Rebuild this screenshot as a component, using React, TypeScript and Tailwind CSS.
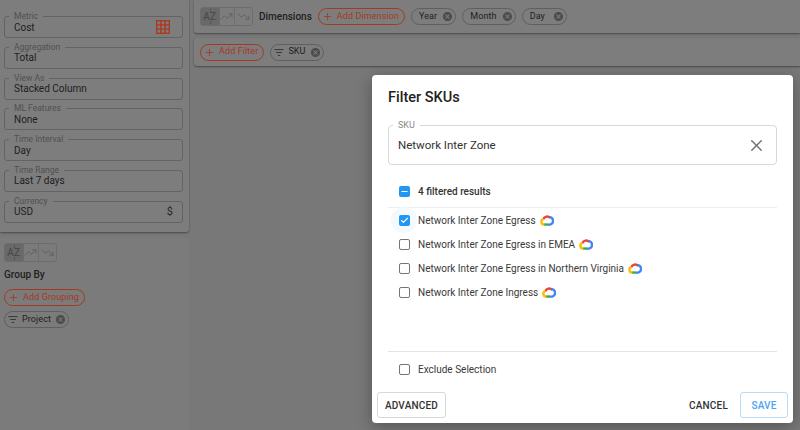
import { Check, Minus, Plus, TrendingDown, TrendingUp, X } from "lucide-react";
import type { ReactNode } from "react";

function CancelIcon({ className }: { className: string }) {
  return (
    <svg viewBox="0 0 24 24" className={className} fill="currentColor">
      <path d="M12 2C6.47 2 2 6.47 2 12s4.47 10 10 10 10-4.47 10-10S17.53 2 12 2zm5 13.59L15.59 17 12 13.41 8.41 17 7 15.59 10.59 12 7 8.41 8.41 7 12 10.59 15.59 7 17 8.41 13.41 12 17 15.59z" />
    </svg>
  );
}

function FilterIcon() {
  return (
    <svg viewBox="0 0 12 10" className="mr-[4px] h-[9px] w-[10px] shrink-0" fill="none" stroke="#333333" strokeWidth="1.1">
      <path d="M0.5 1.5h11M2.5 5h7M4.5 8.5h3" />
    </svg>
  );
}

function GoogleCloud() {
  return (
    <svg viewBox="0 0 24 20" className="h-[12px] w-[14px] shrink-0" fill="none" strokeWidth="4">
      <path stroke="#ea4335" d="M5.5 9A7 7 0 0 1 17.5 6.5" />
      <path stroke="#4285f4" d="M16.5 5.2A6.4 6.4 0 0 1 17.5 17.8H13.5" />
      <path stroke="#34a853" d="M14 17.8H6.5" />
      <path stroke="#fbbc05" d="M7.5 17.8A4.7 4.7 0 0 1 5.8 8.6" />
    </svg>
  );
}

function Field({ label, value, icon }: { label: string; value: string; icon?: ReactNode }) {
  return (
    <div className="relative flex h-[22px] items-center justify-between rounded-[3px] border border-[#636363] pl-[9px] pr-[4px]">
      <span className="absolute -top-[6px] left-[4px] bg-[#7d7d7d] px-[5px] text-[8.5px] leading-[11px] text-[#505050]">{label}</span>
      <span className="text-[10px] text-[#1e1e1e]">{value}</span>
      {icon}
    </div>
  );
}

function SortToggle() {
  return (
    <div className="flex h-[19px] w-[53px] rounded-[3px] border border-[#6d6d6d] text-[#5a5a5a]">
      <div className="relative flex w-[18px] items-center justify-center bg-[#696969] text-[10px] tracking-[0.2px] text-[#464646]">
        <span className="absolute left-1/2 top-[1px] h-[3px] border-l border-dotted border-[#464646]" />
        <span className="absolute bottom-[1px] left-1/2 h-[3px] border-l border-dotted border-[#464646]" />
        <span>AZ</span>
      </div>
      <div className="flex w-[17px] items-center justify-center border-x border-[#6d6d6d]">
        <TrendingUp className="h-[13px] w-[13px]" strokeWidth={1.4} />
      </div>
      <div className="flex w-[17px] items-center justify-center">
        <TrendingDown className="h-[13px] w-[13px]" strokeWidth={1.4} />
      </div>
    </div>
  );
}

function AddChip({ label }: { label: string }) {
  return (
    <div className="flex h-[17px] items-center gap-[4px] rounded-full border border-[#a5391f] pl-[3px] pr-[5px] text-[9px] tracking-[0.1px] text-[#a5391f]">
      <Plus className="h-[11px] w-[11px]" strokeWidth={1.8} />
      <span>{label}</span>
    </div>
  );
}

function Chip({ label, filter }: { label: string; filter?: boolean }) {
  return (
    <div className="flex h-[17px] min-w-[45px] items-center justify-between rounded-full border border-[#5f5f5f] pl-[3px] pr-[2px] text-[9px] tracking-[0.1px] text-[#1e1e1e]">
      <span className="flex items-center">
        {filter && <FilterIcon />}
        <span className={filter ? "mr-[4px]" : "mr-[5px] ml-[4px]"}>{label}</span>
      </span>
      <CancelIcon className="h-[11px] w-[11px] text-[#4d4d4d]" />
    </div>
  );
}

function Checkbox({ state }: { state?: "checked" | "partial" }) {
  if (state) {
    return (
      <span className="flex h-[11px] w-[11px] shrink-0 items-center justify-center rounded-[2px] bg-[#2196f3] text-white">
        {state === "checked" ? <Check className="h-[9px] w-[9px]" strokeWidth={3} /> : <Minus className="h-[9px] w-[9px]" strokeWidth={3} />}
      </span>
    );
  }
  return <span className="h-[11px] w-[11px] shrink-0 rounded-[2px] border-[1.5px] border-[#757575]" />;
}

function SkuRow({ label, checked }: { label: string; checked?: boolean }) {
  return (
    <div className="relative flex h-[24px] items-center pl-[11px]">
      {checked && <span className="absolute left-[3px] top-[-1px] h-[26px] w-[26px] rounded-full bg-[#f4f9fe]" />}
      <span className="relative flex items-center">
        <Checkbox state={checked ? "checked" : undefined} />
        <span className="ml-[8px] mr-[4px] text-[10px] text-[#3a3a3a]">{label}</span>
        <GoogleCloud />
      </span>
    </div>
  );
}

export default function App() {
  return (
    <div className="relative flex h-[430px] w-[800px] gap-[5px] overflow-hidden bg-[#787878] font-['Roboto',sans-serif]">
      <aside className="flex w-[189px] shrink-0 flex-col gap-[6px]">
        <div className="flex h-[232px] flex-col gap-[8.8px] rounded-br-[3px] bg-[#7d7d7d] pl-[4px] pr-[6px] pt-[16px] shadow-[0_1px_2px_rgba(0,0,0,0.4)]">
          <Field
            label="Metric"
            value="Cost"
            icon={
              <svg viewBox="0 0 14 14" className="mr-[8px] h-[14px] w-[14px]" fill="none" stroke="#ab3a1f" strokeWidth="1.4">
                <rect x="0.7" y="0.7" width="12.6" height="12.6" />
                <path d="M4.9 0.7v12.6M9.1 0.7v12.6M0.7 4.9h12.6M0.7 9.1h12.6" />
              </svg>
            }
          />
          <Field label="Aggregation" value="Total" />
          <Field label="View As" value="Stacked Column" />
          <Field label="ML Features" value="None" />
          <Field label="Time Interval" value="Day" />
          <Field label="Time Range" value="Last 7 days" />
          <Field label="Currency" value="USD" icon={<span className="mr-[5px] text-[11px] text-[#262626]">$</span>} />
        </div>
        <div className="flex flex-1 flex-col items-start rounded-tr-[3px] bg-[#7b7b7b] pl-[4px] pt-[5px]">
          <SortToggle />
          <span className="mt-[5px] text-[10px] font-medium leading-[16px] text-[#1e1e1e]">Group By</span>
          <div className="mt-[6px]">
            <AddChip label="Add Grouping" />
          </div>
          <div className="mt-[5px]">
            <Chip label="Project" filter />
          </div>
        </div>
      </aside>

      <main className="flex flex-1 flex-col gap-[5px]">
        <div className="flex h-[33px] items-center gap-[6px] rounded-bl-[3px] bg-[#7d7d7d] pl-[6px] shadow-[0_1px_2px_rgba(0,0,0,0.4)]">
          <SortToggle />
          <span className="text-[10px] font-medium text-[#1e1e1e]">Dimensions</span>
          <AddChip label="Add Dimension" />
          <Chip label="Year" />
          <Chip label="Month" />
          <Chip label="Day" />
        </div>
        <div className="flex h-[28px] items-center gap-[6px] rounded-l-[3px] bg-[#7d7d7d] pl-[6px] shadow-[0_1px_2px_rgba(0,0,0,0.4)]">
          <AddChip label="Add Filter" />
          <Chip label="SKU" filter />
        </div>
      </main>

      {/* dialog */}
      <div className="absolute left-[372px] top-[75px] flex h-[348px] w-[421px] flex-col rounded-[4px] bg-white px-[16px] shadow-[0_4px_16px_rgba(0,0,0,0.3)]">
        <h2 className="mt-[13px] text-[14.5px] font-medium leading-[20px] text-[#222222]">Filter SKUs</h2>
        <div className="relative mt-[17px] flex h-[40px] items-center justify-between rounded-[4px] border border-[#d8d8d8] pl-[9px] pr-[10px]">
          <span className="absolute -top-[6px] left-[4px] bg-white px-[5px] text-[9px] leading-[11px] text-[#8a8a8a]">SKU</span>
          <span className="pt-[1px] text-[11.5px] text-[#333333]">Network Inter Zone</span>
          <X className="h-[19px] w-[19px] text-[#707070]" strokeWidth={1.7} />
        </div>
        <div className="mt-[14px] flex h-[29px] items-center border-b border-[#eeeeee] pb-[3px] pl-[11px]">
          <Checkbox state="partial" />
          <span className="ml-[8px] text-[10px] font-medium text-[#333333]">4 filtered results</span>
        </div>
        <div>
          <SkuRow label="Network Inter Zone Egress" checked />
          <SkuRow label="Network Inter Zone Egress in EMEA" />
          <SkuRow label="Network Inter Zone Egress in Northern Virginia" />
          <SkuRow label="Network Inter Zone Ingress" />
        </div>
        <div className="mt-[47px] flex h-[36px] items-center border-t border-[#e4e4e4] pl-[11px]">
          <Checkbox />
          <span className="ml-[8px] text-[10px] text-[#3a3a3a]">Exclude Selection</span>
        </div>
        <div className="-ml-[11px] -mr-[11px] mt-[5px] flex items-center justify-between">
          <button className="h-[26px] w-[69px] rounded-[3px] border border-[#d8d8d8] text-[10px] font-medium tracking-[0.2px] text-[#333333]">ADVANCED</button>
          <div className="flex items-center gap-[12px]">
            <button className="text-[10px] font-medium tracking-[0.2px] text-[#333333]">CANCEL</button>
            <button className="h-[26px] w-[48px] rounded-[3px] border border-[#b8dcfa] text-[10px] font-medium tracking-[0.2px] text-[#4aa5f0]">SAVE</button>
          </div>
        </div>
      </div>
    </div>
  );
}
